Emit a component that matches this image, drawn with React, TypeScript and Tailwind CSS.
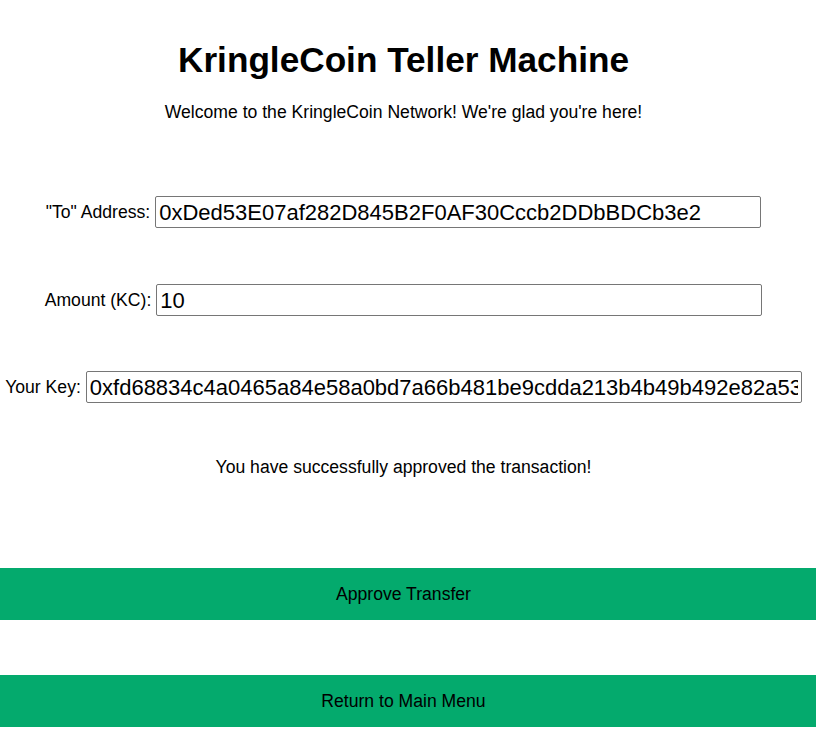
export default function App() {
  return (
    <div
      className="w-[807px] flex flex-col items-center bg-white text-black pt-[40px]"
      style={{ fontFamily: '"Liberation Sans", Arial, sans-serif' }}
    >
      <h1 className="text-[35.2px] leading-[40px] font-bold">KringleCoin Teller Machine</h1>
      <p className="mt-[20px] text-[17.6px] leading-[24px]">
        Welcome to the KringleCoin Network! We're glad you're here!
      </p>

      {/* form rows */}
      <div className="mt-[72px] flex items-center justify-center gap-[5px]">
        <label className="text-[17.6px]">"To" Address:</label>
        <input
          readOnly
          value="0xDed53E07af282D845B2F0AF30Cccb2DDbBDCb3e2"
          className="w-[606px] h-[32px] px-[3px] text-[22px] border border-[#767676] rounded-[2px] outline-none"
        />
      </div>
      <div className="mt-[56px] flex items-center justify-center gap-[5px]">
        <label className="text-[17.6px]">Amount (KC):</label>
        <input
          readOnly
          value="10"
          className="w-[606px] h-[32px] px-[3px] text-[22px] border border-[#767676] rounded-[2px] outline-none"
        />
      </div>
      <div className="mt-[55px] flex items-center justify-center gap-[5px]">
        <label className="text-[17.6px]">Your Key:</label>
        <input
          readOnly
          value="0xfd68834c4a0465a84e58a0bd7a66b481be9cdda213b4b49b492e82a53e4ba1d7"
          className="w-[716px] h-[32px] px-[3px] text-[22px] border border-[#767676] rounded-[2px] outline-none"
        />
      </div>

      <p className="mt-[52px] text-[17.6px] leading-[24px]">
        You have successfully approved the transaction!
      </p>

      <button className="self-start mt-[89px] w-[816px] h-[52px] pr-[9px] bg-[#04AA6D] text-[17.6px] text-black">
        Approve Transfer
      </button>
      <button className="self-start mt-[55px] w-[816px] h-[52px] pr-[9px] bg-[#04AA6D] text-[17.6px] text-black">
        Return to Main Menu
      </button>
    </div>
  );
}
